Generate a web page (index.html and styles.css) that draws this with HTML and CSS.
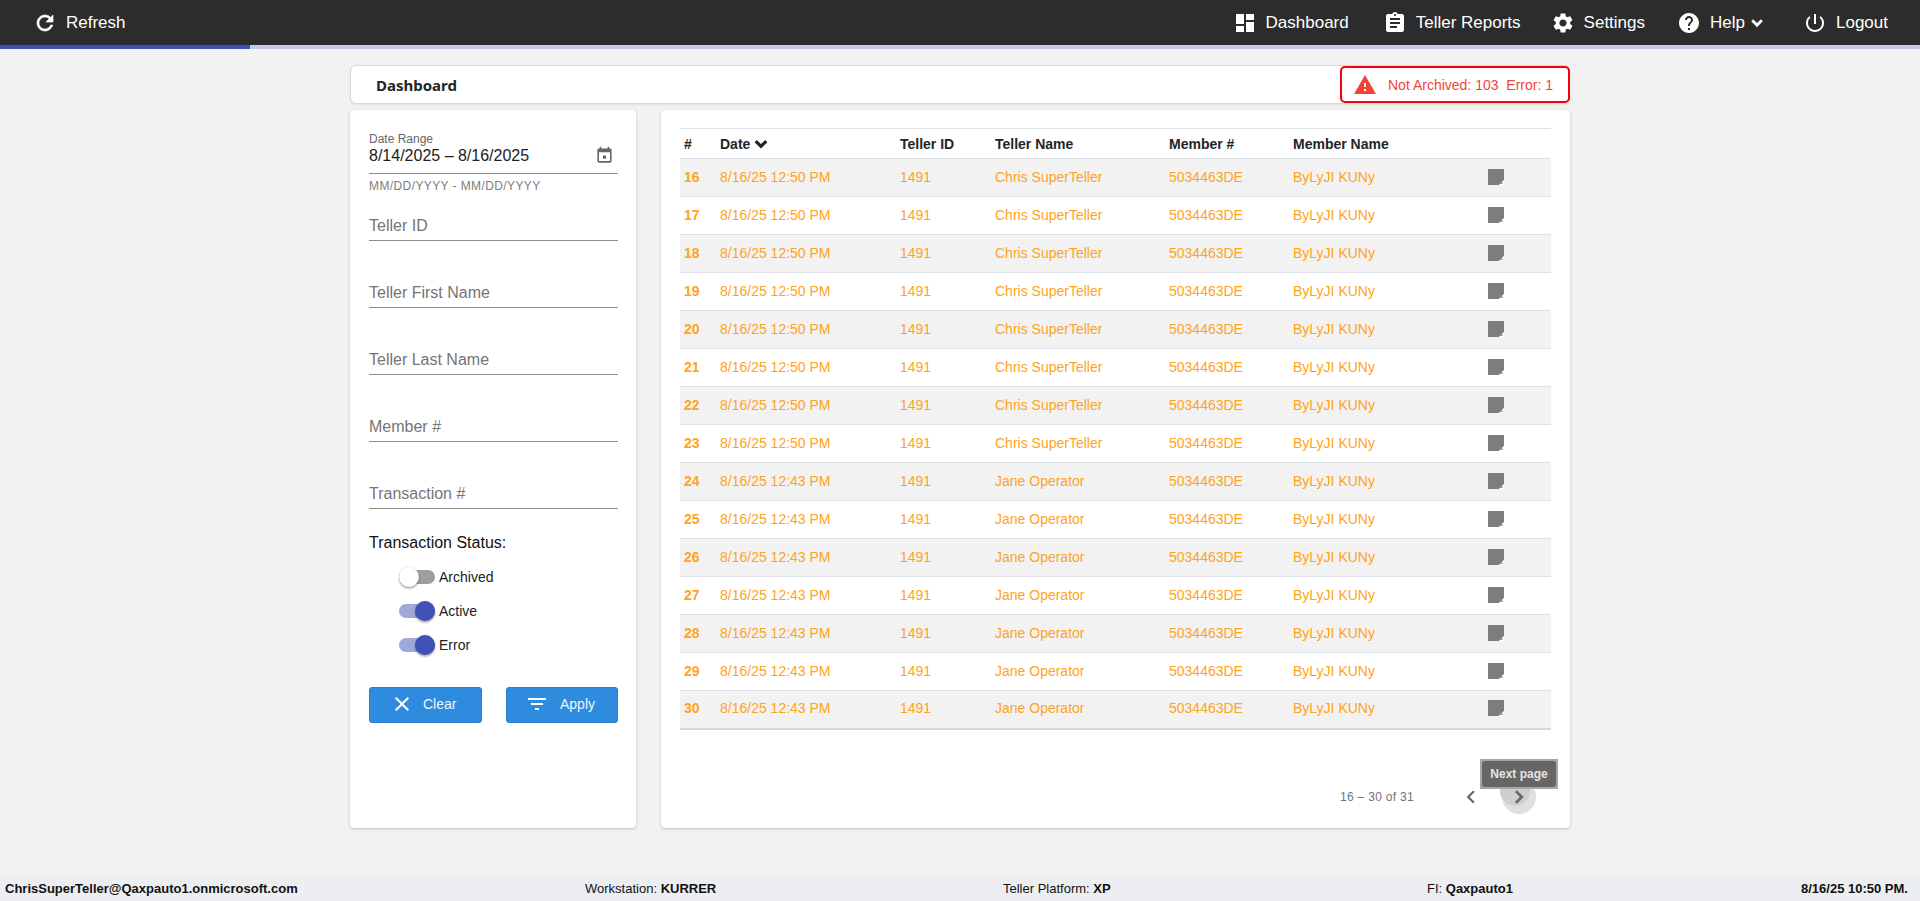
FILE: index.html
```html
<!DOCTYPE html>
<html lang="en">
<head>
<meta charset="utf-8">
<title>Dashboard</title>
<link rel="stylesheet" href="styles.css">
</head>
<body>
<svg class="defs" width="0" height="0" aria-hidden="true">
  <symbol id="i-refresh" viewBox="0 0 24 24"><path d="M17.65 6.35C16.2 4.9 14.21 4 12 4c-4.42 0-7.99 3.58-7.99 8s3.57 8 7.99 8c3.73 0 6.84-2.55 7.73-6h-2.08c-.82 2.33-3.04 4-5.65 4-3.31 0-6-2.69-6-6s2.69-6 6-6c1.66 0 3.14.69 4.22 1.78L13 11h7V4l-2.35 2.35z" stroke="currentColor" stroke-width=".7"/></symbol>
  <symbol id="i-dash" viewBox="0 0 24 24"><path d="M3 13h8V3H3v10zm0 8h8v-6H3v6zm10 0h8V11h-8v10zm0-18v6h8V3h-8z"/></symbol>
  <symbol id="i-report" viewBox="0 0 24 24"><path d="M19 3h-4.18C14.4 1.84 13.3 1 12 1c-1.3 0-2.4.84-2.82 2H5c-1.1 0-2 .9-2 2v14c0 1.1.9 2 2 2h14c1.1 0 2-.9 2-2V5c0-1.1-.9-2-2-2zm-7 0c.55 0 1 .45 1 1s-.45 1-1 1-1-.45-1-1 .45-1 1-1zm2 14H7v-2h7v2zm3-4H7v-2h10v2zm0-4H7V7h10v2z"/></symbol>
  <symbol id="i-gear" viewBox="0 0 24 24"><path d="M19.14 12.94c.04-.3.06-.61.06-.94 0-.32-.02-.64-.07-.94l2.03-1.58c.18-.14.23-.41.12-.61l-1.92-3.32c-.12-.22-.37-.29-.59-.22l-2.39.96c-.5-.38-1.03-.7-1.62-.94l-.36-2.54c-.04-.24-.24-.41-.48-.41h-3.84c-.24 0-.43.17-.47.41l-.36 2.54c-.59.24-1.13.57-1.62.94l-2.39-.96c-.22-.08-.47 0-.59.22L2.74 8.87c-.12.21-.08.47.12.61l2.03 1.58c-.05.3-.09.63-.09.94s.02.64.07.94l-2.03 1.58c-.18.14-.23.41-.12.61l1.92 3.32c.12.22.37.29.59.22l2.39-.96c.5.38 1.03.7 1.62.94l.36 2.54c.05.24.24.41.48.41h3.84c.24 0 .44-.17.47-.41l.36-2.54c.59-.24 1.13-.56 1.62-.94l2.39.96c.22.08.47 0 .59-.22l1.92-3.32c.12-.22.07-.47-.12-.61l-2.01-1.58zM12 15.6c-1.98 0-3.6-1.62-3.6-3.6s1.62-3.6 3.6-3.6 3.6 1.62 3.6 3.6-1.62 3.6-3.6 3.6z"/></symbol>
  <symbol id="i-help" viewBox="0 0 24 24"><path d="M12 2C6.48 2 2 6.48 2 12s4.48 10 10 10 10-4.48 10-10S17.52 2 12 2zm1 17h-2v-2h2v2zm2.07-7.75l-.9.92C13.45 12.9 13 13.5 13 15h-2v-.5c0-1.1.45-2.1 1.17-2.83l1.24-1.26c.37-.36.59-.86.59-1.41 0-1.1-.9-2-2-2s-2 .9-2 2H8c0-2.21 1.79-4 4-4s4 1.79 4 4c0 .88-.36 1.68-.93 2.25z"/></symbol>
  <symbol id="i-power" viewBox="0 0 24 24"><path d="M13 3h-2v10h2V3zm4.83 2.17l-1.42 1.42C17.99 7.86 19 9.81 19 12c0 3.87-3.13 7-7 7s-7-3.13-7-7c0-2.19 1.01-4.14 2.58-5.42L6.17 5.17C4.23 6.82 3 9.26 3 12c0 4.97 4.03 9 9 9s9-4.03 9-9c0-2.74-1.23-5.18-3.17-6.83z"/></symbol>
  <symbol id="i-down" viewBox="0 0 24 24"><path d="M16.59 8.59L12 13.17 7.41 8.59 6 10l6 6 6-6z" stroke="currentColor" stroke-width="1.4"/></symbol>
  <symbol id="i-warn" viewBox="0 0 24 24"><path d="M1 21h22L12 2 1 21zm12-3h-2v-2h2v2zm0-4h-2v-4h2v4z"/></symbol>
  <symbol id="i-cal" viewBox="0 0 24 24"><path d="M19 3h-1V1h-2v2H8V1H6v2H5c-1.11 0-1.99.9-1.99 2L3 19c0 1.1.89 2 2 2h14c1.1 0 2-.9 2-2V5c0-1.1-.9-2-2-2zm0 16H5V8h14v11zM10 12h4v4h-4z"/></symbol>
  <symbol id="i-x" viewBox="0 0 24 24"><path d="M19 6.41L17.59 5 12 10.59 6.41 5 5 6.41 10.59 12 5 17.59 6.41 19 12 13.41 17.59 19 19 17.59 13.41 12z"/></symbol>
  <symbol id="i-filter" viewBox="0 0 24 24"><path d="M10 18h4v-2h-4v2zM3 6v2h18V6H3zm3 7h12v-2H6v2z"/></symbol>
  <symbol id="i-note" viewBox="0 0 16 16"><path d="M0 0h16v11L11 16H0z"/><path d="M16 11v5h-5z" fill="#fff"/><path d="M12.500 13.500h2v1.500h-2z" fill="#7d8694"/></symbol>
  <symbol id="i-left" viewBox="0 0 24 24"><path d="M15.41 7.410L14 6l-6 6 6 6 1.410-1.410L10.830 12z"/></symbol>
  <symbol id="i-right" viewBox="0 0 24 24"><path d="M10 6L8.590 7.410 13.170 12l-4.580 4.590L10 18l6-6z" stroke="currentColor" stroke-width=".6"/></symbol>
</svg>

<header class="navbar">
  <a class="nav-item nav-refresh"><svg class="nav-icon"><use href="#i-refresh"/></svg>Refresh</a>
  <nav class="nav-right">
    <a class="nav-item nav-dash"><svg class="nav-icon"><use href="#i-dash"/></svg>Dashboard</a>
    <a class="nav-item nav-reports"><svg class="nav-icon"><use href="#i-report"/></svg>Teller Reports</a>
    <a class="nav-item nav-settings"><svg class="nav-icon"><use href="#i-gear"/></svg>Settings</a>
    <a class="nav-item nav-help"><svg class="nav-icon"><use href="#i-help"/></svg>Help<svg class="nav-chevron"><use href="#i-down"/></svg></a>
    <a class="nav-item nav-logout"><svg class="nav-icon"><use href="#i-power"/></svg>Logout</a>
  </nav>
</header>
<div class="progress"><div class="progress-bar"></div></div>

<main class="main">
  <div class="container">
    <div class="title-card">
      <h1 class="title">Dashboard</h1>
      <div class="alert-box"><svg class="alert-icon"><use href="#i-warn"/></svg><span class="alert-text">Not Archived: 103&nbsp; Error: 1</span></div>
    </div>
    <div class="columns">
      <aside class="card filters">
        <div class="date-field">
          <div class="date-label">Date Range</div>
          <div class="date-value"><span>8/14/2025 – 8/16/2025</span><svg class="cal-icon"><use href="#i-cal"/></svg></div>
        </div>
        <div class="date-hint">MM/DD/YYYY - MM/DD/YYYY</div>
        <div class="text-field">Teller ID</div>
        <div class="text-field">Teller First Name</div>
        <div class="text-field">Teller Last Name</div>
        <div class="text-field">Member #</div>
        <div class="text-field">Transaction #</div>
        <div class="status-title">Transaction Status:</div>
        <div class="toggles">
          <div class="toggle-row"><span class="toggle"><span class="thumb"></span></span><span>Archived</span></div>
          <div class="toggle-row"><span class="toggle on"><span class="thumb"></span></span><span>Active</span></div>
          <div class="toggle-row"><span class="toggle on"><span class="thumb"></span></span><span>Error</span></div>
        </div>
        <div class="buttons">
          <button class="btn btn-clear"><svg class="btn-icon"><use href="#i-x"/></svg>Clear</button>
          <button class="btn btn-apply"><svg class="btn-icon"><use href="#i-filter"/></svg>Apply</button>
        </div>
      </aside>

      <section class="card results">
        <table class="grid">
          <colgroup>
            <col class="c-num"><col class="c-date"><col class="c-id"><col class="c-name"><col class="c-member"><col class="c-mname"><col class="c-note">
          </colgroup>
          <thead>
            <tr><th>#</th><th><span class="sort-head">Date<svg class="sort-icon"><use href="#i-down"/></svg></span></th><th>Teller ID</th><th>Teller Name</th><th>Member #</th><th>Member Name</th><th></th></tr>
          </thead>
          <tbody>
            <tr><td class="num">16</td><td>8/16/25 12:50 PM</td><td>1491</td><td>Chris SuperTeller</td><td>5034463DE</td><td>ByLyJI KUNy</td><td><svg class="note"><use href="#i-note"/></svg></td></tr>
            <tr><td class="num">17</td><td>8/16/25 12:50 PM</td><td>1491</td><td>Chris SuperTeller</td><td>5034463DE</td><td>ByLyJI KUNy</td><td><svg class="note"><use href="#i-note"/></svg></td></tr>
            <tr><td class="num">18</td><td>8/16/25 12:50 PM</td><td>1491</td><td>Chris SuperTeller</td><td>5034463DE</td><td>ByLyJI KUNy</td><td><svg class="note"><use href="#i-note"/></svg></td></tr>
            <tr><td class="num">19</td><td>8/16/25 12:50 PM</td><td>1491</td><td>Chris SuperTeller</td><td>5034463DE</td><td>ByLyJI KUNy</td><td><svg class="note"><use href="#i-note"/></svg></td></tr>
            <tr><td class="num">20</td><td>8/16/25 12:50 PM</td><td>1491</td><td>Chris SuperTeller</td><td>5034463DE</td><td>ByLyJI KUNy</td><td><svg class="note"><use href="#i-note"/></svg></td></tr>
            <tr><td class="num">21</td><td>8/16/25 12:50 PM</td><td>1491</td><td>Chris SuperTeller</td><td>5034463DE</td><td>ByLyJI KUNy</td><td><svg class="note"><use href="#i-note"/></svg></td></tr>
            <tr><td class="num">22</td><td>8/16/25 12:50 PM</td><td>1491</td><td>Chris SuperTeller</td><td>5034463DE</td><td>ByLyJI KUNy</td><td><svg class="note"><use href="#i-note"/></svg></td></tr>
            <tr><td class="num">23</td><td>8/16/25 12:50 PM</td><td>1491</td><td>Chris SuperTeller</td><td>5034463DE</td><td>ByLyJI KUNy</td><td><svg class="note"><use href="#i-note"/></svg></td></tr>
            <tr><td class="num">24</td><td>8/16/25 12:43 PM</td><td>1491</td><td>Jane Operator</td><td>5034463DE</td><td>ByLyJI KUNy</td><td><svg class="note"><use href="#i-note"/></svg></td></tr>
            <tr><td class="num">25</td><td>8/16/25 12:43 PM</td><td>1491</td><td>Jane Operator</td><td>5034463DE</td><td>ByLyJI KUNy</td><td><svg class="note"><use href="#i-note"/></svg></td></tr>
            <tr><td class="num">26</td><td>8/16/25 12:43 PM</td><td>1491</td><td>Jane Operator</td><td>5034463DE</td><td>ByLyJI KUNy</td><td><svg class="note"><use href="#i-note"/></svg></td></tr>
            <tr><td class="num">27</td><td>8/16/25 12:43 PM</td><td>1491</td><td>Jane Operator</td><td>5034463DE</td><td>ByLyJI KUNy</td><td><svg class="note"><use href="#i-note"/></svg></td></tr>
            <tr><td class="num">28</td><td>8/16/25 12:43 PM</td><td>1491</td><td>Jane Operator</td><td>5034463DE</td><td>ByLyJI KUNy</td><td><svg class="note"><use href="#i-note"/></svg></td></tr>
            <tr><td class="num">29</td><td>8/16/25 12:43 PM</td><td>1491</td><td>Jane Operator</td><td>5034463DE</td><td>ByLyJI KUNy</td><td><svg class="note"><use href="#i-note"/></svg></td></tr>
            <tr><td class="num">30</td><td>8/16/25 12:43 PM</td><td>1491</td><td>Jane Operator</td><td>5034463DE</td><td>ByLyJI KUNy</td><td><svg class="note"><use href="#i-note"/></svg></td></tr>
          </tbody>
        </table>
        <div class="pager">
          <span class="pager-text">16 – 30 of 31</span>
          <button class="pager-btn"><svg class="pager-icon"><use href="#i-left"/></svg></button>
          <button class="pager-btn pager-active">
            <span class="ripple"></span>
            <svg class="pager-icon"><use href="#i-right"/></svg>
            <span class="tooltip"><span class="tooltip-inner">Next page</span></span>
          </button>
        </div>
      </section>
    </div>
  </div>
</main>

<footer class="footer">
  <span class="strong">ChrisSuperTeller@Qaxpauto1.onmicrosoft.com</span>
  <span>Workstation: <b>KURRER</b></span>
  <span>Teller Platform: <b>XP</b></span>
  <span>FI: <b>Qaxpauto1</b></span>
  <span class="strong">8/16/25 10:50 PM.</span>
</footer>
</body>
</html>
```
FILE: styles.css
```css
* { box-sizing: border-box; }
html, body { height: 100%; }
body {
  margin: 0;
  display: flex;
  flex-direction: column;
  height: 100vh;
  overflow: hidden;
  background: #f2f2f2;
  color: #212529;
  font-family: "Liberation Sans", Arial, sans-serif;
}
.defs { position: absolute; }

/* Top bar */
.navbar {
  height: 45px;
  flex: none;
  display: flex;
  align-items: center;
  justify-content: space-between;
  background: #2c2c2c;
  color: #fff;
  font-size: 17px;
  padding: 0 32px 0 33px;
}
.nav-right { display: flex; align-items: center; }
.nav-item { display: flex; align-items: center; color: #fff; }
.nav-icon { width: 24px; height: 24px; fill: #fff; color: #fff; margin-right: 9px; flex: none; }
.nav-reports { margin-left: 34px; }
.nav-settings { margin-left: 30px; }
.nav-help { margin-left: 32px; }
.nav-logout { margin-left: 36px; }
.nav-chevron { width: 20px; height: 20px; fill: #fff; color: #fff; margin-left: 2px; }
.progress { height: 4px; flex: none; background: #c5cae9; }
.progress-bar { width: 250px; height: 100%; background: #3f51b5; }

/* Main area */
.main { flex: 1; min-height: 0; padding-top: 16px; }
.container { width: 1220px; margin: 0 auto 0 350px; }
.title-card {
  height: 39px;
  display: flex;
  align-items: center;
  justify-content: space-between;
  background: #fff;
  border: 1px solid #d8d8d8;
  border-radius: 6px;
  padding-left: 25px;
  box-shadow: 0 1px 2px rgba(0,0,0,.08);
}
.title { margin: 0; font: 700 15px "Noto Sans", sans-serif; color: #212529; }
.alert-box {
  width: 230px;
  height: 37px;
  display: flex;
  align-items: center;
  background: #fff;
  border: 2px solid #f5000f;
  border-radius: 5px;
  padding-left: 11px;
  margin-right: -1px;
}
.alert-icon { width: 24px; height: 24px; fill: #f44336; flex: none; }
.alert-text { margin-left: 11px; font-size: 14px; color: #f44336; white-space: nowrap; }

.columns { display: flex; gap: 25px; margin-top: 6px; height: 718px; }
.card {
  background: #fff;
  border-radius: 4px;
  box-shadow: 0 1px 3px rgba(0,0,0,.22);
}

/* Filter panel */
.filters { width: 286px; flex: none; padding: 22px 18px 0 19px; }
.date-field { border-bottom: 1px solid #8f8f8f; height: 42px; }
.date-label { font-size: 12px; line-height: 14px; color: #666; }
.date-value {
  display: flex;
  align-items: center;
  justify-content: space-between;
  font-size: 16px;
  line-height: 18px;
  color: #212121;
  padding-right: 4px;
}
.cal-icon { width: 19px; height: 19px; fill: #666; }
.date-hint { margin-top: 5px; font-size: 12px; line-height: 14px; letter-spacing: .4px; color: #7d7d7d; }
.text-field {
  height: 48px;
  margin-top: 19px;
  display: flex;
  align-items: flex-end;
  border-bottom: 1px solid #8f8f8f;
  padding-bottom: 5px;
  font-size: 16px;
  line-height: 18px;
  color: #757575;
}
.date-hint + .text-field { margin-top: 0; }
.status-title { margin-top: 25px; font-size: 16px; line-height: 18px; color: #111; }
.toggles { margin-top: 8px; padding-left: 30px; }
.toggle-row { height: 34px; display: flex; align-items: center; gap: 4px; font-size: 14px; color: #212121; }
.toggle { position: relative; width: 36px; height: 14px; border-radius: 7px; background: #9e9e9e; flex: none; }
.toggle .thumb {
  position: absolute;
  left: 0;
  top: -3px;
  width: 20px;
  height: 20px;
  border-radius: 50%;
  background: #fff;
  box-shadow: 0 2px 2px rgba(0,0,0,.28), 0 0 2px rgba(0,0,0,.18);
}
.toggle.on { background: #9fa8da; }
.toggle.on .thumb { left: 16px; background: #3f51b5; }
.buttons { display: flex; justify-content: space-between; margin-top: 25px; }
.btn {
  height: 36px;
  display: flex;
  align-items: center;
  border: 1px solid #2a7fca;
  border-radius: 3px;
  background: #2e8bdd;
  color: #eef5fc;
  font: 14px "Liberation Sans", Arial, sans-serif;
  padding: 0 0 2px;
}
.btn-clear { width: 113px; padding-left: 20px; }
.btn-apply { width: 112px; padding-left: 18px; }
.btn-icon { width: 24px; height: 24px; fill: #fff; flex: none; }
.btn-clear .btn-icon { margin-right: 9px; }
.btn-apply .btn-icon { margin-right: 11px; }

/* Results */
.results { flex: 1; padding: 18px 19px 0; }
.grid { width: 871px; table-layout: fixed; border-collapse: collapse; font-size: 14px; }
.c-num { width: 36px; }
.c-date { width: 180px; }
.c-id { width: 95px; }
.c-name { width: 174px; }
.c-member { width: 124px; }
.c-mname { width: 195px; }
.c-note { width: 67px; }
.grid th {
  height: 30px;
  padding: 0 4px;
  text-align: left;
  font-weight: 700;
  color: #212529;
  border-top: 1px solid #dee2e6;
  border-bottom: 1px solid #dee2e6;
}
.sort-head { display: flex; align-items: center; height: 16px; }
.sort-icon { width: 22px; height: 22px; flex: none; fill: #212529; color: #212529; }
.grid td {
  height: 38px;
  padding: 0 4px 2px;
  color: #ffa31a;
  border-bottom: 1px solid #dee2e6;
}
.grid tbody tr:nth-child(odd) td { background: #f2f2f2; }
.grid tbody tr:last-child td { border-bottom: 2px solid #d6d8dc; }
.grid td.num { font-weight: 700; }
.note { width: 16px; height: 16px; fill: #7d7d7d; display: block; }

.pager { display: flex; align-items: center; justify-content: flex-end; height: 34px; margin-top: 50px; padding-right: 15px; }
.pager-text { font-size: 12px; letter-spacing: .3px; color: #6c757d; margin-right: 40px; }
.pager-btn {
  position: relative;
  width: 34px;
  height: 34px;
  padding: 0;
  border: 0;
  border-radius: 50%;
  background: transparent;
  color: #666;
  display: flex;
  align-items: center;
  justify-content: center;
  margin-left: 14px;
}
.pager-btn:first-of-type { margin-left: 0; }
.pager-icon { position: relative; width: 26px; height: 26px; fill: #666; }
.pager-active { background: #e0e0e0; }
.ripple { position: absolute; left: -2px; top: -4px; width: 30px; height: 30px; border-radius: 50%; background: #cfcfcf; }
.tooltip {
  position: absolute;
  left: -22px;
  top: -21px;
  width: 78px;
  height: 30px;
  padding: 2px;
  background: #a6a6a6;
}
.tooltip-inner {
  display: flex;
  align-items: center;
  justify-content: center;
  height: 100%;
  background: #666;
  border-radius: 3px;
  color: #e4e4e4;
  font: 700 12px "Liberation Sans", Arial, sans-serif;
}

/* Footer */
.footer {
  height: 26px;
  flex: none;
  display: grid;
  grid-template-columns: 580px 418px 424px 374px 1fr;
  align-items: center;
  padding-left: 5px;
  background: #eceef1;
  color: #111;
  font-size: 13px;
  white-space: nowrap;
}
.strong { font-weight: 700; }
```
